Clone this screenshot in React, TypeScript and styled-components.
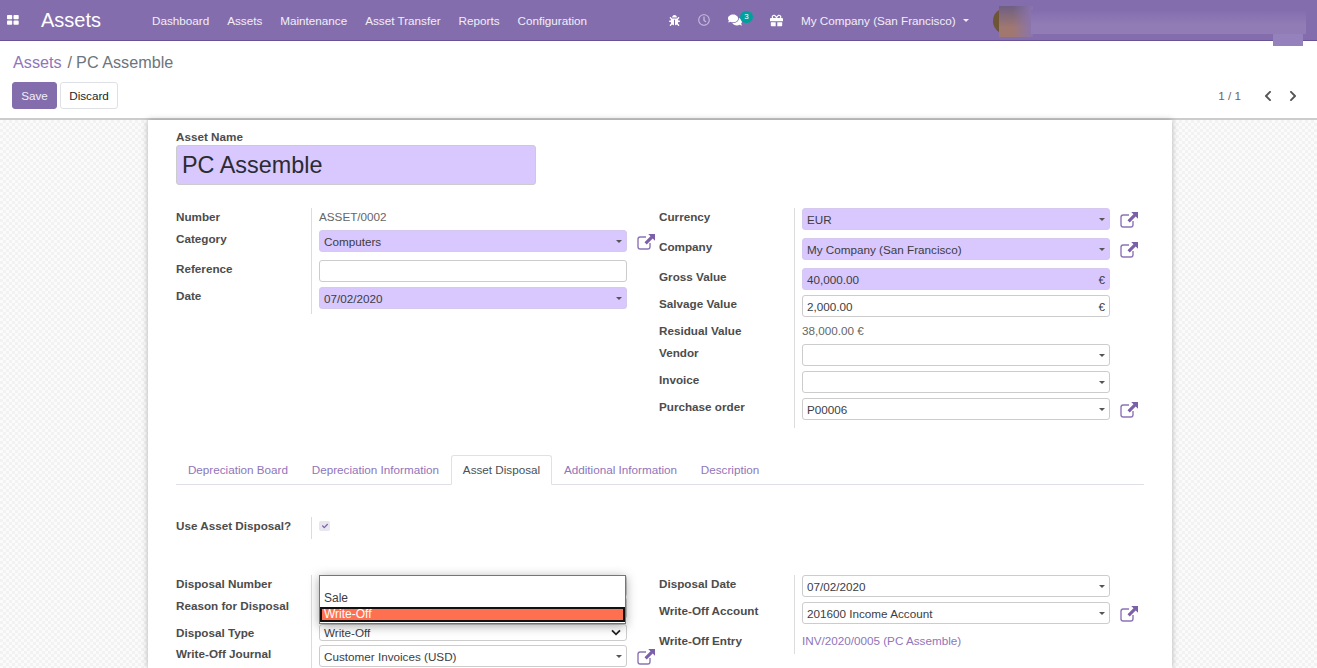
import React from "react";
import styled, { createGlobalStyle } from "styled-components";
import {
  FaBug,
  FaRegClock,
  FaComments,
  FaGift,
  FaChevronLeft,
  FaChevronRight,
  FaCheck,
} from "react-icons/fa";

const GlobalStyle = createGlobalStyle`
  html, body {
    margin: 0;
    height: 100%;
    overflow: hidden;
    background: #fff;
    font-family: "Liberation Sans", Arial, sans-serif;
    font-size: 11.7px;
    color: #4c4c4c;
  }
`;

const menus = [
  "Dashboard",
  "Assets",
  "Maintenance",
  "Asset Transfer",
  "Reports",
  "Configuration",
];

const tabs = [
  "Depreciation Board",
  "Depreciation Information",
  "Asset Disposal",
  "Additional Information",
  "Description",
];

const ExternalLink = () => (
  <LinkIcon viewBox="0 0 18 16" width="18" height="16">
    <path
      d="M9 3H3.2C2 3 1 4 1 5.2v7.6C1 14 2 15 3.2 15h7.6c1.2 0 2.2-1 2.2-2.2V9"
      fill="none"
      stroke="#8d74b8"
      strokeWidth="1.4"
    />
    <path d="M11.2 0H18v6.8l-2.3-2.3-6 6-2.2-2.2 6-6z" fill="#7c5fa8" />
  </LinkIcon>
);

export default function App() {
  return (
    <Page>
      <GlobalStyle />
      <TopBar>
        <AppsIcon viewBox="0 0 12 10" width="12" height="10">
          <rect x="0" y="0" width="5.2" height="4.2" rx="0.8" />
          <rect x="6.5" y="0" width="5.2" height="4.2" rx="0.8" />
          <rect x="0" y="5.6" width="5.2" height="4.2" rx="0.8" />
          <rect x="6.5" y="5.6" width="5.2" height="4.2" rx="0.8" />
        </AppsIcon>
        <Brand>Assets</Brand>
        <MenuList>
          {menus.map((m) => (
            <MenuItem key={m}>{m}</MenuItem>
          ))}
        </MenuList>
        <Systray>
          <TrayIcon $w={29}>
            <FaBug size={11} />
          </TrayIcon>
          <TrayIcon $w={30} $dim>
            <FaRegClock size={12} />
          </TrayIcon>
          <TrayIcon $w={42}>
            <FaComments size={14} />
            <Badge>3</Badge>
          </TrayIcon>
          <TrayIcon $w={31}>
            <FaGift size={13} />
          </TrayIcon>
          <CompanyMenu>
            My Company (San Francisco)
            <CompanyCaret />
          </CompanyMenu>
        </Systray>
        <BlurredUser>
          <Avatar />
          <AvatarSmudge />
          <NameSmudge />
          <DropSmudge />
        </BlurredUser>
      </TopBar>

      <ControlPanel>
        <Breadcrumb>
          <a>Assets</a>
          <Separator>/</Separator>PC Assemble
        </Breadcrumb>
        <ButtonRow>
          <ButtonGroup>
            <PrimaryButton>Save</PrimaryButton>
            <DefaultButton>Discard</DefaultButton>
          </ButtonGroup>
          <Pager>
            <PagerCount>1 / 1</PagerCount>
            <PagerArrow>
              <FaChevronLeft size={12} />
            </PagerArrow>
            <PagerArrow>
              <FaChevronRight size={12} />
            </PagerArrow>
          </Pager>
        </ButtonRow>
      </ControlPanel>

      <Content>
        <Sheet>
          <NameLabel>Asset Name</NameLabel>
          <TitleInput>PC Assemble</TitleInput>

          <Columns $top={23}>
            <FieldGroup>
              <Row $h={22}>
                <Label>Number</Label>
                <PlainValue>ASSET/0002</PlainValue>
              </Row>
              <Row $h={30}>
                <Label>Category</Label>
                <Input $required>
                  Computers
                  <Caret />
                </Input>
                <ExternalLink />
              </Row>
              <Row $h={27}>
                <Label>Reference</Label>
                <Input />
              </Row>
              <Row $h={27}>
                <Label>Date</Label>
                <Input $required>
                  07/02/2020
                  <Caret />
                </Input>
              </Row>
            </FieldGroup>

            <FieldGroup>
              <Row $h={30}>
                <Label>Currency</Label>
                <Input $required>
                  EUR
                  <Caret />
                </Input>
                <ExternalLink />
              </Row>
              <Row $h={30}>
                <Label>Company</Label>
                <Input $required>
                  My Company (San Francisco)
                  <Caret />
                </Input>
                <ExternalLink />
              </Row>
              <Row $h={27}>
                <Label>Gross Value</Label>
                <Input $required>
                  40,000.00
                  <Currency>€</Currency>
                </Input>
              </Row>
              <Row $h={27}>
                <Label>Salvage Value</Label>
                <Input>
                  2,000.00
                  <Currency>€</Currency>
                </Input>
              </Row>
              <Row $h={22}>
                <Label>Residual Value</Label>
                <PlainValue>38,000.00 €</PlainValue>
              </Row>
              <Row $h={27}>
                <Label>Vendor</Label>
                <Input>
                  <Caret />
                </Input>
              </Row>
              <Row $h={27}>
                <Label>Invoice</Label>
                <Input>
                  <Caret />
                </Input>
              </Row>
              <Row $h={30}>
                <Label>Purchase order</Label>
                <Input>
                  P00006
                  <Caret />
                </Input>
                <ExternalLink />
              </Row>
            </FieldGroup>
          </Columns>

          <TabBar>
            {tabs.map((t) => (
              <Tab key={t} $active={t === "Asset Disposal"}>
                {t}
              </Tab>
            ))}
          </TabBar>

          <ToggleGroup>
            <Row $h={22}>
              <Label>Use Asset Disposal?</Label>
              <CheckBox>
                <FaCheck size={6} />
              </CheckBox>
            </Row>
          </ToggleGroup>

          <Columns $top={36}>
            <FieldGroup>
              <Row $h={22}>
                <Label>Disposal Number</Label>
                <Input />
              </Row>
              <Row $h={27}>
                <Label>Reason for Disposal</Label>
                <Input />
              </Row>
              <Row $h={21}>
                <Label>Disposal Type</Label>
                <NativeSelect>
                  Write-Off
                  <svg viewBox="0 0 12 8" width="10" height="7">
                    <path
                      d="M1.2 1.5 6 6.2l4.8-4.7"
                      fill="none"
                      stroke="#222"
                      strokeWidth="2.2"
                    />
                  </svg>
                </NativeSelect>
              </Row>
              <Row $h={30}>
                <Label>Write-Off Journal</Label>
                <Input>
                  Customer Invoices (USD)
                  <Caret />
                </Input>
                <ExternalLink />
              </Row>
              <OptionList>
                <OptionRow $h={14.5} />
                <OptionRow $h={16.5}>Sale</OptionRow>
                <OptionRow $h={15} $selected>
                  Write-Off
                </OptionRow>
              </OptionList>
            </FieldGroup>

            <FieldGroup>
              <Row $h={27}>
                <Label>Disposal Date</Label>
                <Input>
                  07/02/2020
                  <Caret />
                </Input>
              </Row>
              <Row $h={30}>
                <Label>Write-Off Account</Label>
                <Input>
                  201600 Income Account
                  <Caret />
                </Input>
                <ExternalLink />
              </Row>
              <Row $h={22}>
                <Label>Write-Off Entry</Label>
                <LinkValue>INV/2020/0005 (PC Assemble)</LinkValue>
              </Row>
            </FieldGroup>
          </Columns>
        </Sheet>
      </Content>
    </Page>
  );
}

const Page = styled.div`
  height: 668px;
  overflow: hidden;
  display: flex;
  flex-direction: column;
`;

const TopBar = styled.header`
  height: 40px;
  flex: none;
  display: flex;
  align-items: center;
  background: #846dad;
  border-bottom: 1px solid #6a5296;
  color: #fff;
  position: relative;
`;

const AppsIcon = styled.svg`
  fill: #fff;
  margin-left: 7px;
  flex: none;
`;

const Brand = styled.div`
  font-size: 20px;
  margin-left: 22px;
  width: 111px;
`;

const MenuList = styled.nav`
  display: flex;
  gap: 18px;
`;

const MenuItem = styled.span`
  color: #f2eef8;
`;

const Systray = styled.div`
  display: flex;
  align-items: center;
  margin-left: 82px;
`;

const TrayIcon = styled.span<{ $w: number; $dim?: boolean }>`
  width: ${(p) => p.$w}px;
  display: flex;
  align-items: center;
  position: relative;
  color: ${(p) => (p.$dim ? "#c5b9da" : "#fff")};
`;

const Badge = styled.span`
  position: absolute;
  left: 12px;
  top: -2px;
  width: 13px;
  height: 12px;
  border-radius: 6px;
  background: #00a09d;
  color: #fff;
  font-size: 8px;
  line-height: 12px;
  text-align: center;
`;

const CompanyMenu = styled.div`
  display: flex;
  align-items: center;
  gap: 7px;
  color: #f2eef8;
`;

const CompanyCaret = styled.span`
  border-top: 3px solid #f2eef8;
  border-left: 3px solid transparent;
  border-right: 3px solid transparent;
`;

const BlurredUser = styled.div`
  position: absolute;
  left: 993px;
  top: 0;
  width: 324px;
  height: 46px;
`;

const Avatar = styled.div`
  position: absolute;
  left: 0;
  top: 8px;
  width: 26px;
  height: 26px;
  border-radius: 50%;
  background: #6d5536;
`;

const AvatarSmudge = styled.div`
  position: absolute;
  left: 6px;
  top: 6px;
  width: 34px;
  height: 31px;
  background: linear-gradient(90deg, rgba(132, 109, 173, 0) 40%, #8a74b0 100%),
    linear-gradient(180deg, #6e5f82, #a07870 70%);
`;

const NameSmudge = styled.div`
  position: absolute;
  left: 38px;
  top: 10px;
  width: 275px;
  height: 24px;
  background: linear-gradient(180deg, #846dad, #917cb6 60%);
`;

const DropSmudge = styled.div`
  position: absolute;
  left: 280px;
  top: 34px;
  width: 30px;
  height: 12px;
  background: #9581bb;
`;

const ControlPanel = styled.div`
  height: 79px;
  flex: none;
  box-sizing: border-box;
  padding: 11px 16px 0 13px;
  border-bottom: 2px solid #ccc;
`;

const Breadcrumb = styled.div`
  font-size: 16.2px;
  line-height: 20px;
  color: #6c757d;

  a {
    color: #8f75bb;
  }
`;

const Separator = styled.span`
  margin: 0 4px 0 6px;
`;

const ButtonRow = styled.div`
  margin: 10px 0 0 -1px;
  display: flex;
  align-items: center;
  justify-content: space-between;
`;

const ButtonGroup = styled.div`
  display: flex;
  gap: 3px;
`;

const PrimaryButton = styled.button`
  height: 27px;
  width: 45px;
  padding: 0;
  border: 1px solid #846dad;
  border-radius: 3px;
  background: #846dad;
  color: #f2eef8;
  font: 11.7px "Liberation Sans", sans-serif;
`;

const DefaultButton = styled.button`
  height: 27px;
  width: 58px;
  padding: 0;
  border: 1px solid #dee2e6;
  border-radius: 3px;
  background: #fff;
  color: #212529;
  font: 11.7px "Liberation Sans", sans-serif;
`;

const Pager = styled.div`
  display: flex;
  align-items: center;
  color: #666;
  gap: 17px;
  margin-right: 4px;
`;

const PagerCount = styled.span`
  margin-right: 6px;
`;

const PagerArrow = styled.span`
  display: flex;
  width: 8px;
  color: #555;
`;

const Content = styled.main`
  flex: 1;
  min-height: 0;
  display: flex;
  padding-left: 148px;
  background-color: #fafafa;
  background-image: repeating-conic-gradient(
    #f2f2f2 0% 25%,
    #fbfbfb 0% 50%
  );
  background-size: 6px 6px;
`;

const Sheet = styled.div`
  width: 1024px;
  box-sizing: border-box;
  background: #fff;
  padding: 10px 28px 0;
  box-shadow: 0 0 6px rgba(0, 0, 0, 0.28);
`;

const NameLabel = styled.div`
  font-weight: 700;
  line-height: 14px;
`;

const TitleInput = styled.div`
  margin-top: 1px;
  width: 360px;
  height: 40px;
  box-sizing: border-box;
  padding-left: 5px;
  border: 1px solid #ccc;
  border-radius: 3px;
  background: #d8c8fd;
  color: #2b2b33;
  font-size: 23.4px;
  line-height: 38px;
`;

const Columns = styled.div<{ $top: number }>`
  display: grid;
  grid-template-columns: 483px 485px;
  margin-top: ${(p) => p.$top}px;
`;

const FieldGroup = styled.div`
  position: relative;
`;

const Row = styled.div<{ $h: number }>`
  display: grid;
  grid-template-columns: 135px 308px 30px;
  height: ${(p) => p.$h}px;
  align-items: start;
  position: relative;
  background: linear-gradient(#dcdcdc, #dcdcdc) 135px 0 / 1px 100% no-repeat;

  & > *:nth-child(2) {
    margin-left: 8px;
    width: 308px;
  }
`;

const Label = styled.div`
  font-weight: 700;
  line-height: 18px;
  color: #4c4c4c;
`;

const PlainValue = styled.div`
  line-height: 18px;
  color: #666;
`;

const LinkValue = styled(PlainValue)`
  color: #8f75bb;
`;

const Input = styled.div<{ $required?: boolean }>`
  box-sizing: border-box;
  height: 22px;
  padding: 1px 4px 0;
  display: flex;
  align-items: center;
  justify-content: space-between;
  color: #3c3c44;
  border: 1px solid ${(p) => (p.$required ? "#d6c9ef" : "#ccc")};
  border-radius: 3px;
  background: ${(p) => (p.$required ? "#d8c8fd" : "#fff")};
`;

const Caret = styled.span`
  margin-left: auto;
  border-top: 3px solid #555;
  border-left: 3px solid transparent;
  border-right: 3px solid transparent;
`;

const Currency = styled.span`
  margin-left: auto;
`;

const LinkIcon = styled.svg`
  margin: 4px 0 0 18px;
`;

const TabBar = styled.div`
  display: flex;
  height: 30px;
  box-sizing: border-box;
  margin-top: 27px;
  border-bottom: 1px solid #dee2e6;
`;

const Tab = styled.div<{ $active?: boolean }>`
  height: 30px;
  box-sizing: border-box;
  padding: 0 10.9px;
  line-height: 28px;
  color: ${(p) => (p.$active ? "#495057" : "#8f75bb")};
  background: ${(p) => (p.$active ? "#fff" : "transparent")};
  border: 1px solid ${(p) => (p.$active ? "#dee2e6" : "transparent")};
  border-bottom-color: ${(p) => (p.$active ? "#fff" : "transparent")};
  border-radius: 3px 3px 0 0;
`;

const ToggleGroup = styled.div`
  margin-top: 32px;
`;

const CheckBox = styled.span`
  width: 11px !important;
  height: 10px;
  margin-top: 4px;
  border-radius: 2px;
  background: #e8e6ee;
  color: #7c5fa8;
  display: flex;
  align-items: center;
  justify-content: center;
`;

const NativeSelect = styled.div`
  box-sizing: border-box;
  height: 17px;
  padding: 0 5px 0 4px;
  display: flex;
  align-items: center;
  justify-content: space-between;
  color: #3c3c44;
  border: 1px solid #ccc;
  border-radius: 3px;
  background: #fff;
`;

const OptionList = styled.div`
  position: absolute;
  left: 143px;
  top: 0;
  width: 307px;
  height: 49px;
  box-sizing: border-box;
  border: 1px solid #767676;
  background: #fff;
  box-shadow: 0 2px 10px rgba(0, 0, 0, 0.35);
  color: #3c3c44;
  font-size: 12px;
`;

const OptionRow = styled.div<{ $h: number; $selected?: boolean }>`
  height: ${(p) => p.$h}px;
  box-sizing: border-box;
  line-height: 15px;
  padding-left: 4px;
  color: ${(p) => (p.$selected ? "#fff" : "inherit")};
  background: ${(p) => (p.$selected ? "#ff7050" : "transparent")};
  outline: ${(p) => (p.$selected ? "2px solid #111" : "none")};
  outline-offset: -2px;
`;
